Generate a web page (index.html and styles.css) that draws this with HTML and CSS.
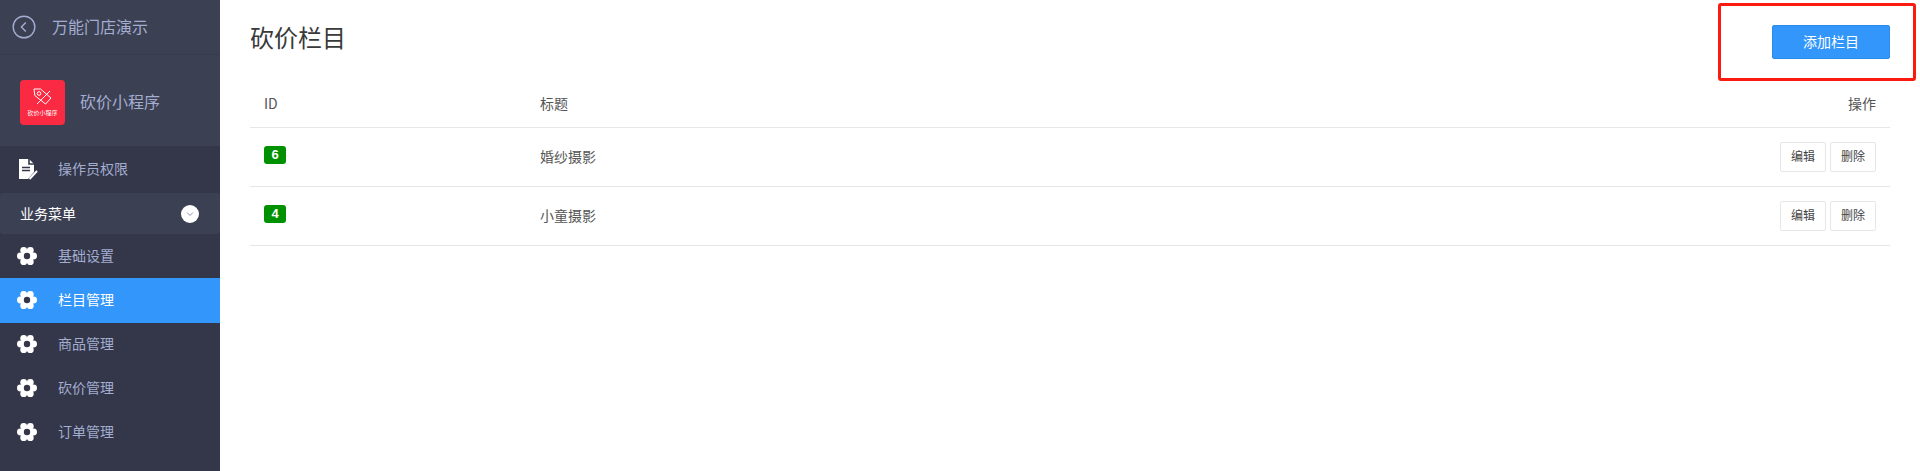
FILE: index.html
```html
<!DOCTYPE html>
<html lang="zh-CN">
<head>
    <meta charset="UTF-8">
    <meta name="viewport" content="width=device-width, initial-scale=1.0">
    <title>砍价栏目</title>
    <link rel="stylesheet" href="styles.css">
</head>
<body>
<svg class="defs">
    <symbol id="gear" viewBox="0 0 20 20">
        <circle cx="16.600" cy="10" r="3.400"/>
        <circle cx="13.300" cy="4.300" r="3.400"/>
        <circle cx="6.700" cy="4.300" r="3.400"/>
        <circle cx="3.400" cy="10" r="3.400"/>
        <circle cx="6.700" cy="15.700" r="3.400"/>
        <circle cx="13.300" cy="15.700" r="3.400"/>
        <circle cx="10" cy="10" r="6"/>
        <circle class="gear_hole" cx="10" cy="10" r="3.200"/>
    </symbol>
</svg>
<div class="layout">
    <aside class="sidebar">
        <div class="store_bar">
            <svg class="back_icon" viewBox="0 0 24 24" width="24" height="24">
                <circle cx="12" cy="12" r="10.800"/>
                <path d="M13.800 7.600 9.400 12l4.400 4.400"/>
            </svg>
            <span>万能门店演示</span>
        </div>
        <div class="app_block">
            <div class="app_logo">
                <svg viewBox="0 0 19 17" width="19" height="17">
                    <path d="M1 1h6.500l10.500 9-5.500 6L1.800 7.500z"/>
                    <circle cx="6" cy="5.500" r="1.800"/>
                    <path d="M4 16 17 3"/>
                </svg>
                <span>砍价小程序</span>
            </div>
            <span class="app_name">砍价小程序</span>
        </div>
        <div class="menu_item perm_item">
            <svg class="menu_icon" viewBox="0 0 20 22" width="20" height="22">
                <path class="doc_body" d="M1 1h10l5 5v8l-6 7H1z"/>
                <path class="doc_lines" d="M11 1v5h5M4 9.500h8M4 12.500h8"/>
                <path class="doc_pen" d="M11.500 21 19 13"/>
            </svg>
            <span>操作员权限</span>
        </div>
        <div class="menu_section">
            <span>业务菜单</span>
            <i class="section_toggle">
                <svg viewBox="0 0 10 10" width="10" height="10"><path d="M2 3.500 5 6.500l3-3"/></svg>
            </i>
        </div>
        <div class="menu_item">
            <svg class="menu_icon gear_icon"><use href="#gear"/></svg>
            <span>基础设置</span>
        </div>
        <div class="menu_item active">
            <svg class="menu_icon gear_icon"><use href="#gear"/></svg>
            <span>栏目管理</span>
        </div>
        <div class="menu_item">
            <svg class="menu_icon gear_icon"><use href="#gear"/></svg>
            <span>商品管理</span>
        </div>
        <div class="menu_item">
            <svg class="menu_icon gear_icon"><use href="#gear"/></svg>
            <span>砍价管理</span>
        </div>
        <div class="menu_item">
            <svg class="menu_icon gear_icon"><use href="#gear"/></svg>
            <span>订单管理</span>
        </div>
    </aside>
    <main class="content">
        <div class="page_head">
            <h1>砍价栏目</h1>
            <button class="add_btn">添加栏目</button>
            <div class="highlight_box"></div>
        </div>
        <table class="data_table">
            <thead>
                <tr>
                    <th class="col_id">ID</th>
                    <th>标题</th>
                    <th class="col_ops">操作</th>
                </tr>
            </thead>
            <tbody>
                <tr>
                    <td><span class="id_badge">6</span></td>
                    <td class="col_title">婚纱摄影</td>
                    <td>
                        <div class="row_ops">
                            <button class="row_btn">编辑</button>
                            <button class="row_btn">删除</button>
                        </div>
                    </td>
                </tr>
                <tr>
                    <td><span class="id_badge">4</span></td>
                    <td class="col_title">小童摄影</td>
                    <td>
                        <div class="row_ops">
                            <button class="row_btn">编辑</button>
                            <button class="row_btn">删除</button>
                        </div>
                    </td>
                </tr>
            </tbody>
        </table>
    </main>
</div>
</body>
</html>
```

FILE: styles.css
```css
* {
    box-sizing: border-box;
}

html, body {
    margin: 0;
    height: 100%;
    overflow: hidden;
}

body {
    background-color: #fff;
    font-family: "Noto Sans CJK SC", "Liberation Sans", sans-serif;
    font-size: 14px;
    color: #555;
}

.defs {
    display: none;
}

.layout {
    display: flex;
    height: 100%;
}

/* sidebar */
.sidebar {
    width: 220px;
    flex-shrink: 0;
    background-color: #333749;
    color: #a3add0;
}

.store_bar {
    height: 55px;
    display: flex;
    align-items: center;
    gap: 16px;
    padding-left: 12px;
    background-color: #3c4053;
    border-bottom: 1px solid #383c4e;
    font-size: 16px;
}

.store_bar span {
    margin-bottom: 2px;
}

.back_icon {
    fill: none;
    stroke: #a3add0;
    stroke-width: 1.400;
}

.app_block {
    height: 91px;
    display: flex;
    align-items: center;
    gap: 15px;
    padding-left: 20px;
    background-color: #3c4053;
    font-size: 16px;
}

.app_logo {
    width: 45px;
    height: 45px;
    margin-top: 4px;
    border-radius: 4px;
    background-color: #f92a42;
    display: flex;
    flex-direction: column;
    align-items: center;
    padding-top: 8px;
    color: #fff;
    font-size: 6px;
    line-height: 9px;
}

.app_logo svg {
    fill: none;
    stroke: #fff;
    stroke-width: 1;
    margin-bottom: 3px;
    flex-shrink: 0;
}

.menu_item {
    height: 44px;
    display: flex;
    align-items: center;
    padding-left: 17px;
    color: #a3add0;
}

.menu_item span {
    margin-bottom: 3px;
}

.menu_item.active {
    height: 45px;
    margin-bottom: -1px;
    background-color: #3296fa;
    color: #fff;
}

.perm_item {
    height: 47px;
    padding-left: 18px;
}

.menu_icon {
    width: 20px;
    height: 20px;
    margin-right: 21px;
    flex-shrink: 0;
}

.gear_icon {
    fill: #fff;
    margin-bottom: 1px;
}

.gear_hole {
    fill: #333749;
}

.menu_item.active .gear_hole {
    fill: #3296fa;
}

.perm_item .menu_icon {
    height: 22px;
    margin-right: 20px;
    margin-bottom: 2px;
}

.doc_body {
    fill: #fff;
}

.doc_lines {
    fill: none;
    stroke: #333749;
    stroke-width: 1.600;
}

.doc_pen {
    fill: none;
    stroke: #fff;
    stroke-width: 2;
}

.menu_section {
    height: 41px;
    display: flex;
    align-items: center;
    justify-content: space-between;
    padding: 0 21px 0 20px;
    background-color: #3c4053;
    border-radius: 3px;
    color: #fff;
}

.menu_section span {
    margin-bottom: 2px;
}

.section_toggle {
    width: 18px;
    height: 18px;
    border-radius: 50%;
    background-color: #fff;
    display: flex;
    align-items: center;
    justify-content: center;
}

.section_toggle svg {
    fill: none;
    stroke: #8a93ad;
    stroke-width: 1;
}

/* content */
.content {
    flex: 1;
    padding: 0 30px;
}

.page_head {
    position: relative;
    height: 80px;
    display: flex;
    align-items: flex-start;
    justify-content: space-between;
}

.page_head h1 {
    margin: 19px 0 0;
    font-size: 24px;
    font-weight: 400;
    line-height: 36px;
    color: #3a3a3a;
}

.add_btn {
    width: 118px;
    height: 34px;
    margin-top: 25px;
    background-color: #3296fa;
    border: 1px solid #2a8bec;
    border-radius: 2px;
    color: #fff;
    font-family: inherit;
    font-size: 14px;
    padding: 0 0 2px;
}

/* annotation drawn over the screenshot */
.highlight_box {
    position: absolute;
    top: 3px;
    right: -26px;
    width: 198px;
    height: 78px;
    border: 3px solid #fb1a10;
    border-radius: 3px;
}

.data_table {
    width: 100%;
    border-collapse: collapse;
    table-layout: fixed;
}

.data_table th,
.data_table td {
    padding: 0 14px;
    border-bottom: 1px solid #e7e7e7;
    text-align: left;
    font-weight: 400;
    color: #555;
}

.data_table th {
    height: 47px;
    padding-bottom: 1px;
}

.data_table td {
    height: 59px;
}

.data_table .col_title {
    padding-bottom: 2px;
}

.data_table .col_id {
    width: 276px;
}

.data_table .col_ops {
    text-align: right;
}

.id_badge {
    display: inline-block;
    width: 22px;
    height: 18px;
    margin-bottom: 4px;
    border-radius: 3px;
    background-color: #009100;
    color: #fff;
    font-family: "Liberation Sans", sans-serif;
    font-size: 13px;
    font-weight: 700;
    line-height: 18px;
    text-align: center;
    vertical-align: middle;
}

.row_ops {
    display: flex;
    justify-content: flex-end;
    gap: 4px;
}

.row_btn {
    width: 46px;
    height: 30px;
    padding: 0 0 2px;
    background-color: #fff;
    border: 1px solid #e7e7e7;
    border-radius: 2px;
    color: #444;
    font-family: inherit;
    font-size: 12px;
}
```
